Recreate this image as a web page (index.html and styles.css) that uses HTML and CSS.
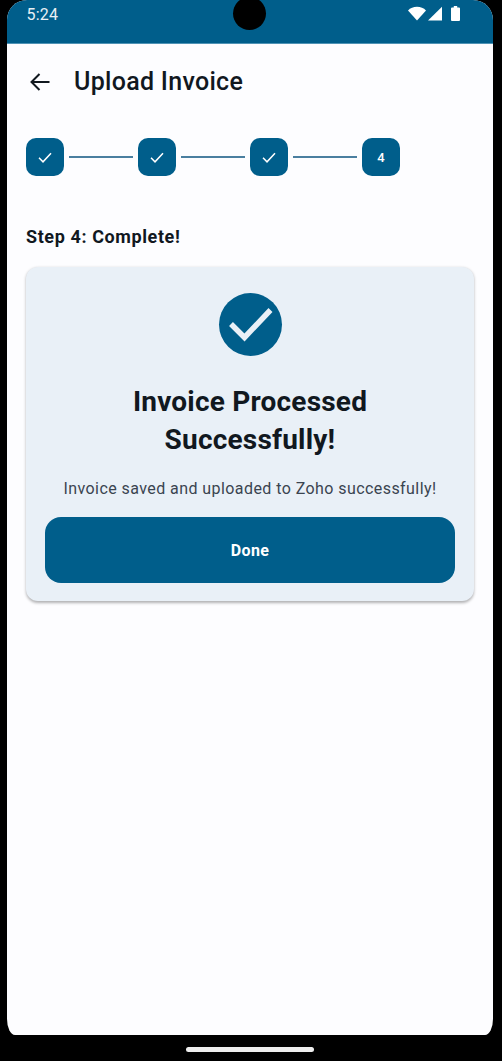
FILE: index.html
```html
<!DOCTYPE html>
<html lang="en">
<head>
<meta charset="utf-8">
<title>Upload Invoice</title>
<link rel="stylesheet" href="styles.css">
</head>
<body>
<div class="screen">
  <header class="status">
    <span class="time">5:24</span>
    <span class="camera"></span>
    <span class="status-icons">
      <svg class="ico-wifi" width="18" height="15" viewBox="0 0 18 15"><path d="M0 4.500C2.300 2.100 5.500.8 9 .8s6.700 1.300 9 3.700L9 14.500z" fill="#fff"/></svg>
      <svg class="ico-signal" width="14" height="15" viewBox="0 0 14 15"><path d="M14 .8V14.500H0z" fill="#fff"/></svg>
      <svg class="ico-batt" width="9" height="15" viewBox="0 0 9 15"><path d="M2.800 0h3.400v1.500H8a1 1 0 0 1 1 1V14a1 1 0 0 1-1 1H1a1 1 0 0 1-1-1V2.500a1 1 0 0 1 1-1h1.800z" fill="#fff"/></svg>
    </span>
  </header>
  <main class="content">
    <div class="appbar">
      <svg class="back" width="22" height="20" viewBox="0 0 22 20"><path d="M20.500 10H2.500M10.500 2l-8 8 8 8" fill="none" stroke="#11181f" stroke-width="2"/></svg>
      <h1 class="title">Upload Invoice</h1>
    </div>
    <div class="stepper">
      <div class="step"><svg width="14" height="11" viewBox="0 0 14 11"><path d="M1 5.800l4 4L13 1.200" fill="none" stroke="#fff" stroke-width="1.500"/></svg></div>
      <div class="line"></div>
      <div class="step"><svg width="14" height="11" viewBox="0 0 14 11"><path d="M1 5.800l4 4L13 1.200" fill="none" stroke="#fff" stroke-width="1.500"/></svg></div>
      <div class="line"></div>
      <div class="step"><svg width="14" height="11" viewBox="0 0 14 11"><path d="M1 5.800l4 4L13 1.200" fill="none" stroke="#fff" stroke-width="1.500"/></svg></div>
      <div class="line"></div>
      <div class="step step-num">4</div>
    </div>
    <h2 class="step-title">Step 4: Complete!</h2>
    <section class="card">
      <div class="badge"><svg width="63" height="63" viewBox="0 0 63 63"><path d="M12 31l13.500 13.500L51.500 17" fill="none" stroke="#e9f0f7" stroke-width="5.500"/></svg></div>
      <h3 class="card-title">Invoice Processed Successfully!</h3>
      <p class="card-text">Invoice saved and uploaded to Zoho successfully!</p>
      <button class="done">Done</button>
    </section>
  </main>
</div>
<div class="nav"><span class="pill"></span></div>
</body>
</html>
```
FILE: styles.css
```css
html, body { margin: 0; padding: 0; background: #000; }
body { width: 502px; height: 1061px; overflow: hidden; font-family: Roboto, "Liberation Sans", sans-serif; color: #11181f; }
h1, h2, h3, p { margin: 0; }

.screen { margin: 0 9px 0 7px; height: 1035px; background: #fdfdff; border-radius: 20px 20px 8px 8px / 20px 20px 16px 16px; overflow: hidden; display: flex; flex-direction: column; }

.status { height: 44px; flex: none; background: #005e8b; border-bottom: 1px solid #4f93b5; box-sizing: border-box; display: flex; align-items: flex-start; justify-content: space-between; padding: 6px 33px 0 19.500px; position: relative; }
.time { color: #e8f0f5; font-size: 16px; line-height: 18px; letter-spacing: .2px; }
.camera { position: absolute; left: 226px; top: -3px; width: 33px; height: 33px; border-radius: 50%; background: #000; }
.status-icons { display: flex; align-items: flex-start; gap: 2px; }
.ico-signal { margin-right: 7px; }

.content { padding: 0 19px; flex: 1; }
.appbar { display: flex; align-items: center; height: 76px; gap: 23px; padding: 0 0 0 3px; }
.title { font-size: 25px; font-weight: 500; line-height: 32px; letter-spacing: .3px; }

.stepper { display: flex; align-items: center; gap: 5px; margin-top: 18px; }
.step { width: 38px; height: 38px; border-radius: 10px; background: #005e8b; display: flex; align-items: center; justify-content: center; color: #fff; font-size: 13px; font-weight: 500; }
.line { width: 64px; height: 2px; background: #4a7fa0; }

.step-title { font-size: 18px; font-weight: 700; line-height: 24px; letter-spacing: .6px; margin-top: 49px; }

.card { margin-top: 18px; width: 448px; height: 334px; box-sizing: border-box; padding: 26px 19px 18px; background: #e9f0f7; border-radius: 12px; box-shadow: 0 1.500px 3px rgba(0,0,0,.3); display: flex; flex-direction: column; align-items: center; }
.badge { width: 63px; height: 63px; border-radius: 50%; background: #005e8b; display: flex; align-items: center; justify-content: center; flex: none; }
.card-title { font-size: 28px; font-weight: 700; line-height: 38px; letter-spacing: .2px; text-align: center; width: 300px; margin-top: 27px; }
.card-text { font-size: 16px; line-height: 24px; letter-spacing: .43px; color: #3a4450; margin-top: 18px; text-align: center; white-space: nowrap; }
.done { margin-top: 16px; width: 410px; height: 66px; flex: none; border: 0; border-radius: 16px; background: #005e8b; color: #fff; font: 700 16px Roboto, "Liberation Sans", sans-serif; letter-spacing: .4px; }

.nav { height: 26px; display: flex; justify-content: center; padding: 12px 2px 0 0; box-sizing: border-box; }
.pill { width: 128px; height: 5px; border-radius: 2.500px; background: #eee; }
```
